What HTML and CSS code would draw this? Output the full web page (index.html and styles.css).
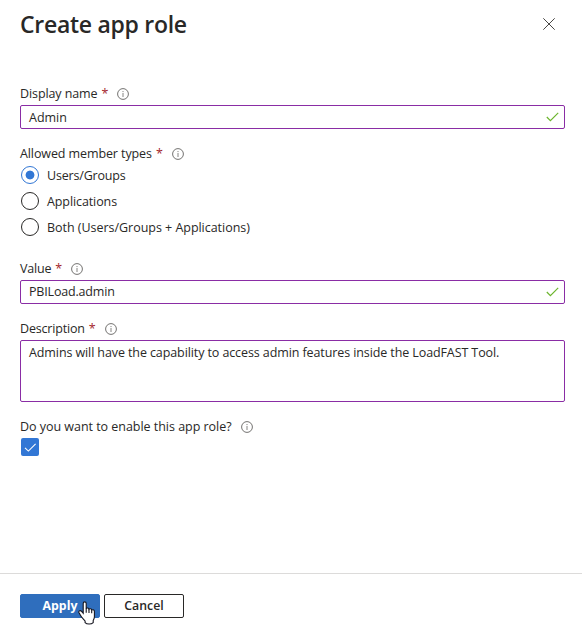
FILE: index.html
```
<!DOCTYPE html>
<html lang="en">
<head>
<meta charset="utf-8">
<title>Create app role</title>
<link rel="stylesheet" href="styles.css">
</head>
<body>
<svg class="defs" aria-hidden="true">
  <symbol id="info" viewBox="0 0 12 12">
    <circle cx="6" cy="6" r="5.4" fill="none" stroke="#737270" stroke-width="1"/>
    <path d="M6 5v4M6 3v1.1" fill="none" stroke="#858482" stroke-width="1"/>
  </symbol>
  <symbol id="valid" viewBox="0 0 13 10">
    <path d="M.8 5l3.6 3.6L12.2.9" fill="none" stroke="#6cb52d" stroke-width="1.2"/>
  </symbol>
</svg>
<main class="panel">
  <header class="header">
    <h1 class="title">Create app role</h1>
    <button class="close" aria-label="Close"><svg viewBox="0 0 12 12"><path d="M.3.3l11.4 11.4M11.7.3L.3 11.7" fill="none" stroke="#484644" stroke-width="1"/></svg></button>
  </header>
  <form class="form">
    <div class="field">
      <div class="label"><span class="snug">Display name</span><span class="required">*</span><svg class="info"><use href="#info"/></svg></div>
      <div class="input"><span class="text">Admin</span><svg class="valid"><use href="#valid"/></svg></div>
    </div>
    <div class="field members">
      <div class="label"><span class="snug">Allowed member types</span><span class="required">*</span><svg class="info"><use href="#info"/></svg></div>
      <div class="options">
        <label class="option"><span class="radio selected"></span><span class="text tight">Users/Groups</span></label>
        <label class="option"><span class="radio"></span><span class="text snug">Applications</span></label>
        <label class="option"><span class="radio"></span><span class="text question">Both (Users/Groups + Applications)</span></label>
      </div>
    </div>
    <div class="field">
      <div class="label"><span class="tight">Value</span><span class="required">*</span><svg class="info"><use href="#info"/></svg></div>
      <div class="input"><span class="tight">PBILoad.admin</span><svg class="valid"><use href="#valid"/></svg></div>
    </div>
    <div class="field">
      <div class="label"><span class="tight">Description</span><span class="required">*</span><svg class="info"><use href="#info"/></svg></div>
      <div class="input textarea"><span class="snug">Admins will have the capability to access admin features inside the LoadFAST Tool.</span></div>
    </div>
    <div class="field">
      <div class="label"><span class="question">Do you want to enable this app role?</span><svg class="info"><use href="#info"/></svg></div>
      <span class="checkbox"><svg viewBox="0 0 18 18"><path d="M4 9.8l3.4 3.3 7.2-7.2" fill="none" stroke="#fff" stroke-width="1.1"/></svg></span>
    </div>
  </form>
  <footer class="footer">
    <button class="button primary">Apply</button>
    <button class="button">Cancel</button>
    <svg class="pointer" viewBox="0 0 18 24"><path d="M5.2 2.500c0-2.200 3-2.200 3 0v5.200c.4-1 2.600-.9 2.800.6.6-.9 2.500-.6 2.700.8.8-.8 2.700-.3 2.700 1.300v5.300c0 1.800-.8 2.600-1.200 3.800v2.100c-1.900 1.800-6.400 1.800-8.100 0v-1.500C5.200 18 3.400 16.500 2.300 14.100L.9 11.500c-.5-1.900 1.500-2.500 2.700-1.200l1.600 2z" fill="#fff" stroke="#15151f" stroke-width="1.1"/><path d="M8.200 7.500v4.200M11 8.300v3.600M13.700 9.300v2.900" fill="none" stroke="#15151f" stroke-width="1.1"/></svg>
  </footer>
</main>
</body>
</html>
```
FILE: styles.css
```
* { box-sizing: border-box; }
body {
  margin: 0;
  background: #fff;
  color: #292827;
  font: 12.5px/18px "Open Sans", "Noto Sans", sans-serif;
}
button { font: inherit; }
.defs { position: absolute; width: 0; height: 0; }
.panel { width: 582px; height: 635px; display: flex; flex-direction: column; }
.header {
  height: 84px;
  padding: 8px 27px 0 20px;
  display: flex;
  justify-content: space-between;
  align-items: flex-start;
}
.title { margin: 0; font-size: 23px; line-height: 32px; font-weight: 600; letter-spacing: -.28px; white-space: nowrap; }
.close { width: 12px; height: 12px; margin-top: 10px; padding: 0; border: 0; background: none; }
.close svg { display: block; width: 12px; height: 12px; }
.form { flex: 1; padding: 0 17px 0 20px; display: flex; flex-direction: column; gap: 15px; }
.label { height: 21px; padding-bottom: 1px; display: flex; align-items: center; white-space: nowrap; }
.text { padding-top: 2px; }
.tight { letter-spacing: -.18px; }
.snug { letter-spacing: -.1px; }
.question { letter-spacing: -.03px; }
.required { margin-left: 4px; color: #a4262c; }
.info { width: 12px; height: 12px; margin: 0 0 0 9px; }
.input {
  height: 24px;
  padding: 0 5px 0 8px;
  border: 1px solid #8a2da5;
  border-radius: 2px;
  display: flex;
  align-items: center;
  justify-content: space-between;
  white-space: nowrap;
}
.valid { width: 13px; height: 10px; }
.textarea { height: 62px; align-items: flex-start; padding-top: 3px; }
.options { display: flex; flex-direction: column; gap: 8px; margin-top: 1px; }
.members { height: 100px; }
.option { display: flex; align-items: center; gap: 8px; height: 18px; white-space: nowrap; }
.radio { width: 18px; height: 18px; margin-left: 1px; border: 1px solid #292827; border-radius: 50%; }
.radio.selected { border-color: #3277d5; background: radial-gradient(circle, #3277d5 0 4px, #fff 4.8px); }
.checkbox { display: block; width: 18px; height: 18px; margin: 0 0 0 1px; border-radius: 2px; background: #3277d5; }
.checkbox svg { display: block; }
.footer { position: relative; height: 62px; padding: 20px 20px 0; border-top: 1px solid #dcdbda; display: flex; gap: 4px; }
.button {
  width: 80px;
  height: 24px;
  padding: 0;
  border: 1px solid #292827;
  border-radius: 2px;
  background: #fff;
  color: #292827;
  font-size: 12.3px;
  line-height: 20px;
  font-weight: 600;
}
.primary { border-color: #2f6ebd; background: #2f6ebd; color: #fff; font-weight: 700; }
.pointer { position: absolute; left: 78px; top: 27px; width: 18px; height: 24px; }
```
